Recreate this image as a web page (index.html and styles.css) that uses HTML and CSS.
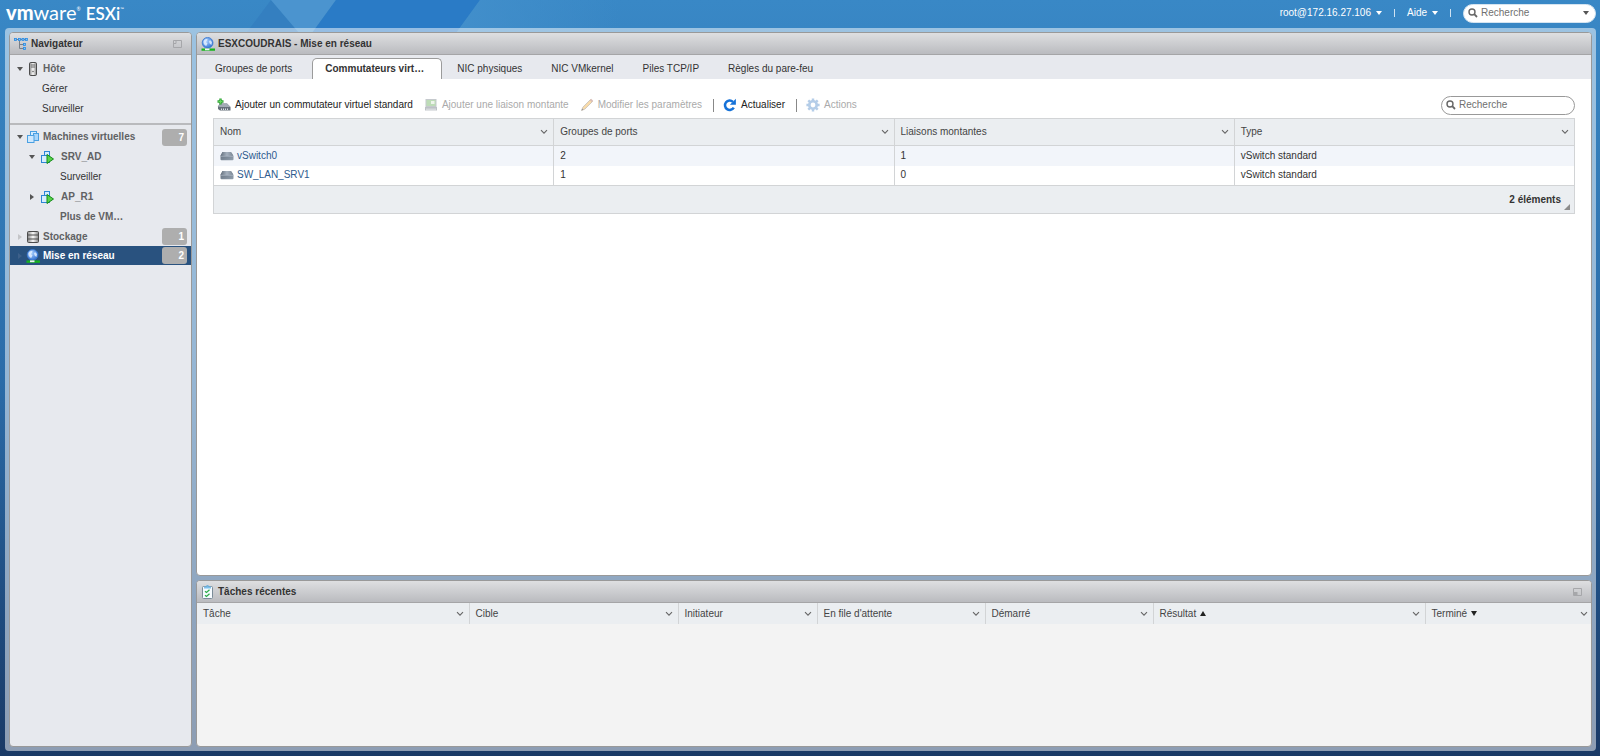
FILE: index.html
```html
<!DOCTYPE html>
<html lang="fr">
<head>
<meta charset="utf-8">
<title>VMware ESXi</title>
<link rel="stylesheet" href="styles.css">
</head>
<body>
<svg width="0" height="0" class="defs" aria-hidden="true">
  <defs>
    <linearGradient id="steel" x1="0" y1="0" x2="1" y2="1"><stop offset="0" stop-color="#5f6b79"/><stop offset="1" stop-color="#93a0ae"/></linearGradient>
    <linearGradient id="steeltop" x1="0" y1="0" x2="1" y2="0"><stop offset="0" stop-color="#66727f"/><stop offset=".5" stop-color="#a5b0bd"/><stop offset="1" stop-color="#7c8895"/></linearGradient>
    <linearGradient id="server" x1="0" y1="0" x2="1" y2="0"><stop offset="0" stop-color="#888"/><stop offset=".5" stop-color="#fafafa"/><stop offset="1" stop-color="#888"/></linearGradient>
    <radialGradient id="ball" cx=".4" cy=".35" r=".7"><stop offset="0" stop-color="#a9d0ff"/><stop offset="1" stop-color="#2f6fd0"/></radialGradient>
    <symbol id="chevron" viewBox="0 0 8 6"><path d="M1 1.2 4 4.2 7 1.2" fill="none" stroke="#666" stroke-width="1.1"/></symbol>
    <symbol id="lens" viewBox="0 0 10 10"><circle cx="4" cy="4" r="3" fill="none" stroke="#666" stroke-width="1.4"/><path d="M6.2 6.2 9 9" stroke="#666" stroke-width="1.8"/></symbol>
    <symbol id="globe" viewBox="0 0 14 14">
      <circle cx="6.600" cy="5.800" r="5.400" fill="url(#ball)" stroke="#3a78d2" stroke-width=".8"/>
      <path d="M2.600 4C4 1.800 6.300 1.700 6.700 2.600L5 5 6.500 6.500 5.200 9C3.500 8.500 2 6.500 2.600 4ZM9 3l2 2-.6 3L8.600 6.600 8 4.600Z" fill="#e3f0ff" opacity=".85"/>
      <path d="M.5 12.600H14" stroke="#17b41d" stroke-width="2.400"/><path d="M4 12.300h4.500" stroke="#eef3f6" stroke-width="1.800"/>
    </symbol>
    <symbol id="vms" viewBox="0 0 12 12"><g stroke="#4aa0e2" fill="#d5ecff"><rect x="3.500" y=".5" width="6" height="6"/><rect x="6.500" y="2.500" width="5" height="7" fill="#a9d6fb"/><rect x=".5" y="4.500" width="6.500" height="7" fill="#cfe8fd"/></g></symbol>
    <symbol id="vmon" viewBox="0 0 13 13"><g stroke="#2e86d6" fill="#d5ecff"><rect x="3.500" y=".5" width="5" height="6"/><rect x=".5" y="4.500" width="8" height="7"/></g><path d="M6 3.500V12.500L12.500 8Z" fill="#59d24a" stroke="#128a18"/></symbol>
    <symbol id="switch" viewBox="0 0 14 10"><path d="M2.500 1H10.500Q11.600 1 13.500 5V8.200Q13.500 9.200 12.500 9.200H1.500Q.5 9.200.5 8.200V4.500Z" fill="url(#steel)"/><path d="M2.500 1H10.500Q11.300 1 13 5H.8Z" fill="url(#steeltop)"/><path d="M1 5.300H13" stroke="#b9c4d0" stroke-width=".6"/></symbol>
  </defs>
</svg>

<svg class="facets" width="620" height="40" viewBox="0 0 620 40" aria-hidden="true">
  <defs><linearGradient id="fade" x1="0" x2="1"><stop offset="0" stop-color="#428fcb"/><stop offset="1" stop-color="#428fcb" stop-opacity="0"/></linearGradient></defs>
  <path d="M241 40 271 0 305 40Z" fill="#347fc0"/>
  <path d="M271 0H336L307 40H305Z" fill="#4b94cf"/>
  <path d="M336 0H480L451 40H307Z" fill="#2a7bc6"/>
  <path d="M480 0H620V40H451Z" fill="url(#fade)"/>
</svg>

<header class="topbar">
  <div class="brand"><span class="brand-vm">vm</span><span class="brand-ware">ware</span><span class="brand-mark">®</span><span class="brand-esxi">ESXi</span><span class="brand-mark">™</span></div>
  <div class="account">
    <button class="top-link" type="button">root@172.16.27.106 <i class="caret"></i></button>
    <span class="top-sep"></span>
    <button class="top-link" type="button">Aide <i class="caret"></i></button>
    <span class="top-sep"></span>
    <label class="search search-top"><svg width="10" height="10"><use href="#lens"/></svg><input type="text" placeholder="Recherche" aria-label="Recherche globale"><i class="caret caret-dark"></i></label>
  </div>
</header>

<div class="frame">
  <aside class="panel navigator">
    <h2 class="panel-head">
      <svg width="14" height="14" viewBox="0 0 14 14"><path d="M2 2.500H12M5.500 3V11.500H10M5.500 7.500H10" fill="none" stroke="#777f88"/><g fill="#7cc4ff" stroke="#2b8be0" stroke-width=".8"><rect x=".5" y="1.500" width="2" height="2"/><rect x="4.500" y="1.500" width="2" height="2"/><rect x="8" y="1.500" width="2" height="2"/><rect x="11.400" y="1.500" width="2" height="2"/><rect x="9.500" y="6.500" width="2" height="2"/><rect x="9.500" y="10.500" width="2" height="2"/></g></svg>
      Navigateur
      <button class="dock" type="button" aria-label="Réduire le navigateur"><svg width="9" height="8" viewBox="0 0 9 8"><path d="M.5.5H8.500V7.500H.5ZM.5 3.500H3V.5" fill="none" stroke="#a6a7aa"/></svg></button>
    </h2>
    <nav>
      <ul class="tree tree-host">
        <li class="row"><i class="arrow down"></i><svg class="ico" width="12" height="14" viewBox="0 0 12 14"><rect x="2.500" y=".5" width="7" height="13" rx="1.200" fill="url(#server)" stroke="#4c4c4c"/><path d="M4 3h4M4 5h4" stroke="#666"/><circle cx="6" cy="9.500" r=".8" fill="#666"/></svg><a href="#">Hôte</a></li>
        <li class="row leaf"><a href="#">Gérer</a></li>
        <li class="row leaf"><a href="#">Surveiller</a></li>
      </ul>
      <ul class="tree tree-vm">
        <li class="row"><i class="arrow down"></i><svg class="ico" width="12" height="12"><use href="#vms"/></svg><a href="#">Machines virtuelles</a><span class="badge">7</span></li>
        <li class="row child"><i class="arrow down"></i><svg class="ico" width="13" height="13"><use href="#vmon"/></svg><a href="#">SRV_AD</a></li>
        <li class="row leaf deep"><a href="#">Surveiller</a></li>
        <li class="row child"><i class="arrow right"></i><svg class="ico" width="13" height="13"><use href="#vmon"/></svg><a href="#">AP_R1</a></li>
        <li class="row leaf deep strong"><a href="#">Plus de VM…</a></li>
        <li class="row short"><i class="arrow right faint"></i><svg class="ico" width="12" height="12" viewBox="0 0 12 12"><rect x=".5" y=".5" width="11" height="11" rx="1" fill="url(#server)" stroke="#4c4c4c"/><path d="M1 4H11M1 8H11" stroke="#4c4c4c"/></svg><a href="#">Stockage</a><span class="badge">1</span></li>
        <li class="row short selected"><i class="arrow right dim"></i><svg class="ico" width="14" height="14"><use href="#globe"/></svg><a href="#">Mise en réseau</a><span class="badge">2</span></li>
      </ul>
    </nav>
  </aside>

  <div class="work">
    <main class="panel content">
      <h1 class="panel-head"><svg width="14" height="14"><use href="#globe"/></svg>ESXCOUDRAIS - Mise en réseau</h1>
      <div class="tabs" role="tablist">
        <button class="tab" role="tab" type="button">Groupes de ports</button>
        <button class="tab active" role="tab" type="button" aria-selected="true">Commutateurs virt…</button>
        <button class="tab" role="tab" type="button">NIC physiques</button>
        <button class="tab" role="tab" type="button">NIC VMkernel</button>
        <button class="tab" role="tab" type="button">Piles TCP/IP</button>
        <button class="tab" role="tab" type="button">Règles du pare-feu</button>
      </div>
      <div class="body">
        <div class="toolbar">
          <button class="tool" type="button"><svg width="14" height="14" viewBox="0 0 14 14"><path d="M1 8.500 3 5.500H10L13.500 9V12.500H3L1 11Z" fill="#66707a"/><path d="M1 8.500 3 5.500H10L13.500 9H3Z" fill="#a3acb5"/><path d="M4.500 10.500v1.500M6.500 10.500v1.500M8.500 10.500v1.500M10.500 10.500v1.500" stroke="#dde2e6"/><path d="M3.500.5V6.500M.5 3.500H6.500" stroke="#2ba332" stroke-width="2.400"/><path d="M3.500 1.500V5.500M1.500 3.500H5.500" stroke="#6fdb63" stroke-width=".9"/></svg>Ajouter un commutateur virtuel standard</button>
          <button class="tool" type="button" disabled><svg width="14" height="14" viewBox="0 0 14 14"><rect x="2" y="1.500" width="10" height="7" fill="#7dbb72" stroke="#8c959d"/><rect x="7" y="3" width="3.500" height="3" fill="#dcebd8"/><path d="M1 9H13V12.500H1Z" fill="#7c858e"/><path d="M3 10.500v2M5 10.500v2M7 10.500v2M9 10.500v2M11 10.500v2" stroke="#dfe3e6"/></svg>Ajouter une liaison montante</button>
          <button class="tool" type="button" disabled><svg width="14" height="14" viewBox="0 0 14 14"><path d="M1.500 12.500 3 9 10.500 1.500 12.500 3.500 5 11Z" fill="#f3b857" stroke="#8e8174" stroke-width=".8"/><path d="M1.500 12.500 2.200 10.600 3.500 11.800Z" fill="#333"/><path d="M10.500 1.500 12.500 3.500" stroke="#b77d70" stroke-width="1.800"/></svg>Modifier les paramètres</button>
          <span class="tool-sep"></span>
          <button class="tool" type="button"><svg width="14" height="14" viewBox="0 0 14 14"><path d="M10.800 9.600A4.700 4.700 0 1 1 9.900 3.800" fill="none" stroke="#1672d8" stroke-width="2.500"/><path d="M12.900.8V6.800H6.900Z" fill="#1672d8"/></svg>Actualiser</button>
          <span class="tool-sep"></span>
          <button class="tool" type="button" disabled><svg width="14" height="14" viewBox="0 0 14 14"><g stroke="#6c9cd2" stroke-width="2.400"><path d="M7 .4V13.600M.4 7H13.600M2.300 2.300 11.700 11.700M11.700 2.300 2.300 11.700"/></g><circle cx="7" cy="7" r="3.700" fill="#fff" stroke="#6c9cd2" stroke-width="2.600"/></svg>Actions</button>
          <label class="search search-table"><svg width="10" height="10"><use href="#lens"/></svg><input type="text" placeholder="Recherche" aria-label="Rechercher un commutateur"></label>
        </div>
        <table class="grid">
          <thead><tr>
            <th><div class="th">Nom<button type="button" aria-label="Menu Nom"><svg width="8" height="6"><use href="#chevron"/></svg></button></div></th>
            <th><div class="th">Groupes de ports<button type="button" aria-label="Menu Groupes de ports"><svg width="8" height="6"><use href="#chevron"/></svg></button></div></th>
            <th><div class="th">Liaisons montantes<button type="button" aria-label="Menu Liaisons montantes"><svg width="8" height="6"><use href="#chevron"/></svg></button></div></th>
            <th><div class="th">Type<button type="button" aria-label="Menu Type"><svg width="8" height="6"><use href="#chevron"/></svg></button></div></th>
          </tr></thead>
          <tbody>
            <tr><td><a href="#"><svg width="14" height="10"><use href="#switch"/></svg>vSwitch0</a></td><td>2</td><td>1</td><td>vSwitch standard</td></tr>
            <tr><td><a href="#"><svg width="14" height="10"><use href="#switch"/></svg>SW_LAN_SRV1</a></td><td>1</td><td>0</td><td>vSwitch standard</td></tr>
          </tbody>
          <tfoot><tr><td colspan="4"><div class="count">2 éléments<i class="grip"></i></div></td></tr></tfoot>
        </table>
      </div>
    </main>

    <section class="panel tasks">
      <h2 class="panel-head">
        <svg width="14" height="14" viewBox="0 0 14 14"><rect x="1.500" y="1.500" width="10" height="12" rx="1" fill="#f6fbff" stroke="#7b8c98"/><path d="M3 1.500h7v2H3Z" fill="#7cc0ec"/><path d="M5 1.500Q6.500-.8 8 1.500" fill="#7cc0ec" stroke="#5ba7db" stroke-width=".8"/><path d="M4 6.200 5.500 7.500 8.500 4.800M4 10.200 5.500 11.500 8.500 8.800" fill="none" stroke="#2fae4c" stroke-width="1.300"/></svg>
        Tâches récentes
        <button class="dock" type="button" aria-label="Réduire les tâches"><svg width="9" height="8" viewBox="0 0 9 8"><path d="M.5.5H8.500V7.500H.5Z" fill="none" stroke="#a6a7aa"/><path d="M1 4H4.500V7H1Z" fill="#a6a7aa"/></svg></button>
      </h2>
      <table class="grid task-grid">
        <colgroup><col class="c-task"><col class="c-target"><col class="c-init"><col class="c-time"><col class="c-time"><col class="c-task"><col class="c-time"></colgroup>
        <thead><tr>
          <th><div class="th">Tâche<button type="button" aria-label="Menu Tâche"><svg width="8" height="6"><use href="#chevron"/></svg></button></div></th>
          <th><div class="th">Cible<button type="button" aria-label="Menu Cible"><svg width="8" height="6"><use href="#chevron"/></svg></button></div></th>
          <th><div class="th">Initiateur<button type="button" aria-label="Menu Initiateur"><svg width="8" height="6"><use href="#chevron"/></svg></button></div></th>
          <th><div class="th">En file d'attente<button type="button" aria-label="Menu En file d'attente"><svg width="8" height="6"><use href="#chevron"/></svg></button></div></th>
          <th><div class="th">Démarré<button type="button" aria-label="Menu Démarré"><svg width="8" height="6"><use href="#chevron"/></svg></button></div></th>
          <th><div class="th">Résultat<i class="sort up"></i><button type="button" aria-label="Menu Résultat"><svg width="8" height="6"><use href="#chevron"/></svg></button></div></th>
          <th><div class="th">Terminé<i class="sort"></i><button type="button" aria-label="Menu Terminé"><svg width="8" height="6"><use href="#chevron"/></svg></button></div></th>
        </tr></thead>
      </table>
    </section>
  </div>
</div>
</body>
</html>
```
FILE: styles.css
```css
* { box-sizing: border-box; }

body {
  margin: 0;
  height: 100vh;
  display: flex;
  flex-direction: column;
  padding-bottom: 5px;
  position: relative;
  font: 10px/14px "Liberation Sans", Arial, sans-serif;
  color: #333;
  background: linear-gradient(#3988c6 0, #3580bd 15%, #2b6ca8 50%, #1e4a7d 82%, #1a3a66 100%);
}

button, input {
  font: inherit;
  color: inherit;
  border: 0;
  background: none;
  padding: 0;
}

a { color: inherit; text-decoration: none; }
svg { flex: none; display: block; }
.defs { position: absolute; }
.facets { position: absolute; left: 0; top: 0; }

/* Top bar */
.topbar {
  position: relative;
  flex: none;
  height: 28px;
  padding: 0 4px 0 6px;
  display: flex;
  justify-content: space-between;
  color: #fff;
}

.brand {
  display: flex;
  align-items: baseline;
  font-family: Lato, sans-serif;
  font-size: 20px;
  line-height: 24px;
}
.brand-vm { font-weight: 900; }
.brand-esxi {
  margin-left: 5px;
  font-family: Lato, sans-serif;
  font-size: 17px;
  font-weight: 600;
}
.brand-mark { font-size: 5px; line-height: 8px; align-self: flex-start; padding-top: 5px; }

.account { display: flex; align-items: center; height: 26px; }
.top-link { display: flex; align-items: center; gap: 5px; }
.top-sep { width: 1px; height: 8px; margin: 0 12px; background: #cfe2f2; }

.caret {
  border: 3px solid transparent;
  border-top: 4px solid #fff;
  border-bottom: 0;
}
.caret-dark { border-top-color: #555; }

.search {
  display: flex;
  align-items: center;
  gap: 3px;
  height: 19px;
  padding: 0 6px 0 4px;
  border: 1px solid #999;
  border-radius: 10px;
  background: #fff;
  color: #333;
}
.search input { flex: 1; min-width: 0; outline: 0; }
.search input::placeholder { color: #707070; opacity: 1; }
.search-top { width: 133px; border-color: #d5e4f0; }
.search-table { width: 134px; margin-left: auto; }

/* Frame and panels */
.frame {
  position: relative;
  flex: 1;
  min-height: 0;
  display: flex;
  gap: 4px;
  margin: 0 4px 0 5px;
  padding: 4px;
  border-radius: 4px;
  background: rgba(255, 255, 255, .5);
}

.panel {
  border: 1px solid #999;
  border-radius: 4px;
  overflow: hidden;
}

.panel-head {
  display: flex;
  align-items: center;
  gap: 3px;
  height: 22px;
  margin: 0;
  padding: 0 9px 0 4px;
  border-bottom: 1px solid #a5a5a7;
  background: linear-gradient(#dedfe1, #babbbf);
  font-size: 10px;
  font-weight: bold;
  color: #333;
}
.dock { margin-left: auto; }

/* Navigator */
.navigator { width: 183px; flex: none; background: #e7e9ee; }
.tree { list-style: none; margin: 0; padding: 0; }
.tree-host { padding: 4px 0; border-bottom: 2px solid #b9babd; }
.tree-vm { padding-top: 2px; }

.row {
  display: flex;
  align-items: center;
  height: 20px;
  padding: 0 4px 0 6px;
  font-weight: bold;
  color: #606163;
}
.child { padding-left: 18px; }
.leaf { padding-left: 32px; font-weight: normal; color: #333; }
.deep { padding-left: 50px; }
.strong { font-weight: bold; color: #606163; }
.short { height: 19px; }
.selected { background: #29527f; color: #fff; }
.ico { margin: 0 4px; }
.child .ico { margin: 0 7px 0 6px; }
.row > .ico[width="14"] { margin: 0 3px; }

.arrow { width: 7px; flex: none; }
.arrow::before { content: ""; display: block; width: 0; margin: auto; border: 3px solid transparent; }
.down::before { border-top: 4px solid #555; border-bottom: 0; }
.right::before { border-left: 4px solid #555; border-right: 0; }
.faint::before { border-left-color: #c4c5c8; }
.dim::before { border-left-color: #3d608a; }

.badge {
  width: 25px;
  height: 17px;
  margin-left: auto;
  padding-right: 3px;
  border-radius: 3px;
  background: #aeaeae;
  color: #fff;
  line-height: 17px;
  text-align: right;
}

/* Main content */
.work { flex: 1; min-width: 0; display: flex; flex-direction: column; gap: 4px; }
.content { flex: 1; background: #fff; }

.tabs {
  display: flex;
  align-items: flex-end;
  gap: 1px;
  height: 24px;
  padding-left: 4px;
  background: #e7e9ee;
}
.tab { height: 21px; padding: 0 14px; }
.active {
  width: 130px;
  margin-left: 5px;
  padding: 0 12px;
  border: 1px solid #9b9b9b;
  border-bottom: 0;
  border-radius: 5px 5px 0 0;
  background: #fff;
  font-weight: bold;
  text-align: left;
}

.body { padding: 16px 16px 0; }
.toolbar { display: flex; align-items: center; height: 20px; margin-bottom: 3px; padding-left: 4px; }
.tool { display: flex; align-items: center; gap: 4px; margin-right: 11px; color: #222; }
.tool:disabled { color: #aaa; }
.tool:disabled svg { opacity: .5; }
.tool-sep { width: 1px; height: 13px; margin-right: 9px; background: #888; }

/* Grids */
.grid {
  width: 100%;
  table-layout: fixed;
  border-collapse: collapse;
  border: 1px solid #d2d4d6;
}
.grid th {
  height: 27px;
  padding: 0 5px 0 6px;
  border: 1px solid #d2d4d6;
  background: #ebeef1;
  font-weight: normal;
  color: #444;
}
.th { display: flex; align-items: center; }
.th button { margin-left: auto; }
.grid td { height: 20px; padding: 0 6px; border: solid #d2d4d6; border-width: 0 1px; }
.grid tbody tr:first-child { background: #f2f5fa; }
.grid td a { display: flex; align-items: center; gap: 3px; color: #2d5a8e; }
.grid tfoot td { height: 28px; padding: 0 4px 0 6px; border-top-width: 1px; background: #ebeef1; }
.count { display: flex; justify-content: flex-end; align-items: center; gap: 3px; font-weight: bold; }
.grip {
  align-self: flex-end;
  margin-bottom: -3px;
  border: 3px solid #8c8c8c;
  border-top-color: transparent;
  border-left-color: transparent;
}

/* Recent tasks */
.tasks { height: 167px; flex: none; background: #f3f3f3; }
.task-grid { border-style: hidden; }
.task-grid th { height: 21px; border-width: 0 1px 1px; }
.c-task { width: 272px; }
.c-target { width: 209px; }
.c-init { width: 139px; }
.c-time { width: 168px; }

.sort { margin-left: 4px; border: 3px solid transparent; border-top: 5px solid #222; border-bottom: 0; }
.sort.up { border-top: 0; border-bottom: 5px solid #222; }
```
